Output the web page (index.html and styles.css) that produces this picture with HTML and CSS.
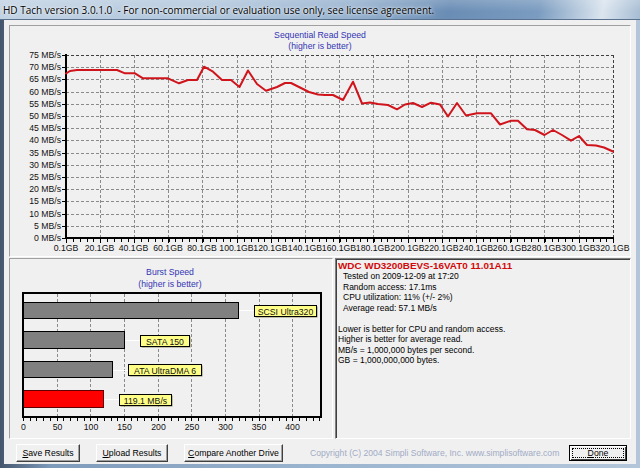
FILE: index.html
```html
<!DOCTYPE html>
<html>
<head>
<meta charset="utf-8">
<title>HD Tach</title>
<link rel="stylesheet" href="styles.css">
</head>
<body>
<div class="window">
  <div class="titlebar"><span class="title-text">HD Tach version 3.0.1.0&nbsp; - For non-commercial or evaluation use only, see license agreement.</span></div>
  <div class="client">
    <div class="seq-panel">
      <svg class="seq-chart" viewBox="10 26 620 230" width="620" height="230">
        <g class="chart-title" text-anchor="middle">
          <text x="320" y="37.5">Sequential Read Speed</text>
          <text x="320" y="48.5">(higher is better)</text>
        </g>
        <path class="grid" d="M66 67.5H613M66 79.5H613M66 92.5H613M66 104.5H613M66 116.5H613M66 128.5H613M66 140.5H613M66 153.5H613M66 165.5H613M66 177.5H613M66 189.5H613M66 201.5H613M66 214.5H613M66 226.5H613"/>
        <path class="grid" d="M100.5 55V238M134.5 55V238M168.5 55V238M202.5 55V238M237.5 55V238M271.5 55V238M305.5 55V238M339.5 55V238M373.5 55V238M408.5 55V238M442.5 55V238M476.5 55V238M510.5 55V238M544.5 55V238M579.5 55V238"/>
        <path class="grid-edge" d="M66 55.5H614M613.5 55V238"/>
        <path class="axis" d="M66 54V239M65 238H614"/>
        <path class="tick" d="M62 55.5H65M62 67.5H65M62 79.5H65M62 92.5H65M62 104.5H65M62 116.5H65M62 128.5H65M62 140.5H65M62 153.5H65M62 165.5H65M62 177.5H65M62 189.5H65M62 201.5H65M62 214.5H65M62 226.5H65M62 238.5H65"/>
        <line class="minor" x1="66" y1="240" x2="614" y2="240"/>
        <path class="tick" d="M66.5 239V243M100.5 239V243M134.5 239V243M168.5 239V243M202.5 239V243M237.5 239V243M271.5 239V243M305.5 239V243M339.5 239V243M373.5 239V243M408.5 239V243M442.5 239V243M476.5 239V243M510.5 239V243M544.5 239V243M579.5 239V243M613.5 239V243"/>
        <g class="ylabels" text-anchor="end">
          <text x="61" y="58">75 MB/s</text>
          <text x="61" y="70">70 MB/s</text>
          <text x="61" y="82">65 MB/s</text>
          <text x="61" y="95">60 MB/s</text>
          <text x="61" y="107">55 MB/s</text>
          <text x="61" y="119">50 MB/s</text>
          <text x="61" y="131">45 MB/s</text>
          <text x="61" y="143">40 MB/s</text>
          <text x="61" y="156">35 MB/s</text>
          <text x="61" y="168">30 MB/s</text>
          <text x="61" y="180">25 MB/s</text>
          <text x="61" y="192">20 MB/s</text>
          <text x="61" y="204">15 MB/s</text>
          <text x="61" y="217">10 MB/s</text>
          <text x="61" y="229">5 MB/s</text>
          <text x="61" y="241">0 MB/s</text>
        </g>
        <g class="xlabels" text-anchor="middle">
          <text x="66" y="251">0.1GB</text>
          <text x="99.5" y="251">20.1GB</text>
          <text x="133.5" y="251">40.1GB</text>
          <text x="168" y="251">60.1GB</text>
          <text x="202" y="251">80.1GB</text>
          <text x="236.5" y="251">100.1GB</text>
          <text x="270.5" y="251">120.1GB</text>
          <text x="305" y="251">140.1GB</text>
          <text x="339" y="251">160.1GB</text>
          <text x="373" y="251">180.1GB</text>
          <text x="407.5" y="251">200.1GB</text>
          <text x="441.5" y="251">220.1GB</text>
          <text x="476" y="251">240.1GB</text>
          <text x="510" y="251">260.1GB</text>
          <text x="544" y="251">280.1GB</text>
          <text x="578.5" y="251">300.1GB</text>
          <text x="612.5" y="251">320.1GB</text>
        </g>
        <polyline class="speed-line" points="66,73.5 70,71 77,70 117,70 125,73.3 135,73.3 143,78.3 168,78.3 179,83.3 188,80 197,80 204,66.7 213,71.7 222,80 231,80 239.5,87 248,70.5 257,84 266,90.7 277,87 285,83 291,83 300,87.5 309,92 318,94.5 325,95 333,95 343,100 353,81.7 362,103.5 370,102.5 378,104 388,105 397,109.3 405,104.5 413,103 422,107 431,102.7 440,104.5 448,116.5 457,103 466,115.5 477,113.3 491,113.3 500,124.5 511,120.7 518,120.7 527,129.3 535,130 544.5,135 553,130 562,135 571,140.7 579,136 587,145 596,145.5 604,147.5 613,151.5"/>
      </svg>
    </div>
    <div class="bottom-row">
      <div class="burst-panel">
        <svg class="burst-chart" viewBox="10 259 322 179" width="322" height="179">
          <g class="chart-title" text-anchor="middle">
            <text x="170" y="275">Burst Speed</text>
            <text x="170" y="286.5">(higher is better)</text>
          </g>
          <path class="grid" d="M57.5 294V416M90.5 294V416M124.5 294V416M158.5 294V416M191.5 294V416M225.5 294V416M259.5 294V416M292.5 294V416"/>
          <rect class="bar" x="23.5" y="302.5" width="215" height="16"/>
          <rect class="bar" x="23.5" y="331.5" width="101" height="17"/>
          <rect class="bar" x="23.5" y="361.5" width="89" height="16"/>
          <rect class="bar bar-drive" x="23.5" y="390.5" width="80" height="17"/>
          <path class="connector" d="M239 310.5H254M125 340.5H140M113 370.5H128M104 399.5H119"/>
          <rect class="label-shadow" x="255.5" y="306.5" width="62" height="11"/>
          <rect class="label-box" x="254.5" y="305.5" width="62" height="11"/>
          <rect class="label-shadow" x="141.5" y="336.5" width="49" height="11"/>
          <rect class="label-box" x="140.5" y="335.5" width="49" height="11"/>
          <rect class="label-shadow" x="129.5" y="365.5" width="73" height="11"/>
          <rect class="label-box" x="128.5" y="364.5" width="73" height="11"/>
          <rect class="label-shadow" x="120.5" y="395.5" width="52" height="11"/>
          <rect class="label-box" x="119.5" y="394.5" width="52" height="11"/>
          <g class="bar-labels" text-anchor="middle">
            <text x="285.5" y="314.5">SCSI Ultra320</text>
            <text x="165" y="344.5">SATA 150</text>
            <text x="165" y="373.5">ATA UltraDMA 6</text>
            <text x="145.5" y="403.5">119.1 MB/s</text>
          </g>
          <rect class="plot-box" x="23" y="293" width="298" height="124"/>
          <line class="minor" x1="23" y1="419" x2="321" y2="419"/>
          <g class="xlabels" text-anchor="middle">
            <text x="23.5" y="430">0</text>
            <text x="57.5" y="430">50</text>
            <text x="91" y="430">100</text>
            <text x="124.5" y="430">150</text>
            <text x="158.5" y="430">200</text>
            <text x="192" y="430">250</text>
            <text x="225.5" y="430">300</text>
            <text x="259" y="430">350</text>
            <text x="292.5" y="430">400</text>
          </g>
        </svg>
      </div>
      <div class="info-panel">
        <div class="drive-name">WDC WD3200BEVS-16VAT0 11.01A11</div>
        <div class="stat">Tested on 2009-12-09 at 17:20</div>
        <div class="stat">Random access: 17.1ms</div>
        <div class="stat">CPU utilization: 11% (+/- 2%)</div>
        <div class="stat">Average read: 57.1 MB/s</div>
        <div class="note gap">Lower is better for CPU and random access.</div>
        <div class="note">Higher is better for average read.</div>
        <div class="note">MB/s = 1,000,000 bytes per second.</div>
        <div class="note">GB = 1,000,000,000 bytes.</div>
      </div>
    </div>
    <div class="button-row">
      <div class="btn btn-save"><u>S</u>ave Results</div>
      <div class="btn btn-upload"><u>U</u>pload Results</div>
      <div class="btn btn-compare"><u>C</u>ompare Another Drive</div>
      <div class="copyright">Copyright (C) 2004 Simpli Software, Inc. www.simplisoftware.com</div>
      <div class="btn btn-done"><span class="focus"><u>D</u>one</span></div>
    </div>
  </div>
</div>
</body>
</html>
```

FILE: styles.css
```css
html, body {
  margin: 0;
  padding: 0;
}
body {
  width: 640px;
  height: 468px;
  overflow: hidden;
  font-family: "Liberation Sans", Arial, sans-serif;
  background: #8ea8c6;
}
.window {
  display: flex;
  flex-direction: column;
  width: 640px;
  height: 468px;
  background: linear-gradient(to right, #44566e 0%, #7f9bbb 8%, #9bb4cf 50%, #b3c6da 100%);
}
.titlebar {
  height: 20px;
  box-sizing: border-box;
  border-bottom: 1px solid #5a7190;
  padding-left: 3px;
  background:
    linear-gradient(to bottom, rgba(255,255,255,0.18), rgba(255,255,255,0) 60%),
    linear-gradient(100deg, #c2d3e4 0%, #b0c6dc 35%, #97b2cf 55%, #6a8db5 70%, #7b9cc0 84%, #dbe5ef 94%, #a6bcd3 100%);
}
.title-text {
  font-family: "Open Sans", "Noto Sans", sans-serif;
  font-size: 10px;
  line-height: 18px;
  color: #000;
  white-space: nowrap;
  text-shadow: 0 0 5px rgba(255,255,255,0.9), 0 0 2px rgba(255,255,255,0.9);
}
.client {
  flex: 1;
  margin: 0 4px 4px 4px;
  padding: 5px 5px 2px 5px;
  background: #f0f0f0;
  display: flex;
  flex-direction: column;
}
.seq-panel {
  height: 232px;
  box-sizing: border-box;
  border: 1px solid;
  border-color: #a0a0a0 #ffffff #ffffff #a0a0a0;
}
.seq-panel svg, .burst-panel svg {
  display: block;
}
.chart-title text {
  fill: #3434b4;
  font-size: 8.7px;
}
svg text {
  font-family: "Liberation Sans", Arial, sans-serif;
  font-size: 8.7px;
  fill: #111;
}
.grid {
  fill: none;
  stroke: #8a8a8a;
  stroke-width: 1;
  stroke-dasharray: 3 2;
  shape-rendering: crispEdges;
}
.grid-edge {
  fill: none;
  stroke: #404040;
  stroke-width: 1;
  stroke-dasharray: 3 2;
  shape-rendering: crispEdges;
}
.axis {
  fill: none;
  stroke: #000;
  stroke-width: 2;
  shape-rendering: crispEdges;
}
.tick {
  fill: none;
  stroke: #000;
  stroke-width: 1;
  shape-rendering: crispEdges;
}
.minor {
  stroke: #000;
  stroke-width: 3;
  stroke-dasharray: 1 5.84;
  shape-rendering: crispEdges;
}
.burst-chart .minor {
  stroke-dasharray: 1 5.735;
}
.speed-line {
  fill: none;
  stroke: #d0141c;
  stroke-width: 2;
  stroke-linejoin: round;
  stroke-linecap: round;
}
.bottom-row {
  display: flex;
  gap: 2px;
  margin-top: 1px;
  height: 181px;
}
.burst-panel {
  width: 324px;
  box-sizing: border-box;
  border: 1px solid;
  border-color: #a0a0a0 #ffffff #ffffff #a0a0a0;
}
.bar {
  fill: #808080;
  stroke: #000;
  stroke-width: 1;
}
.bar-drive {
  fill: #ff0000;
  stroke: #600000;
}
.connector {
  fill: none;
  stroke: #ffffff;
  stroke-width: 1;
}
.label-shadow {
  fill: #8c8c60;
}
.label-box {
  fill: #ffff88;
  stroke: #000;
  stroke-width: 1;
}
.plot-box {
  fill: none;
  stroke: #000;
  stroke-width: 2;
}
.info-panel {
  flex: 1;
  box-sizing: border-box;
  border: 1px solid;
  border-color: #808080 #ffffff #ffffff #808080;
  box-shadow: inset 1px 1px #404040;
  padding: 1px 0 0 2px;
  font-size: 8.5px;
  color: #000;
}
.drive-name {
  color: #d20a0a;
  font-weight: bold;
  font-size: 9.9px;
  line-height: 11px;
  white-space: nowrap;
}
.stat, .note {
  line-height: 10.5px;
  white-space: nowrap;
}
.stat {
  padding-left: 5px;
}
.note.gap {
  margin-top: 10.5px;
}
.button-row {
  display: flex;
  align-items: center;
  height: 18px;
  margin-top: 5px;
  padding-left: 7px;
  padding-right: 4px;
}
.btn {
  box-sizing: border-box;
  height: 18px;
  display: flex;
  align-items: center;
  justify-content: center;
  font-size: 8.7px;
  color: #000;
  background: #f0f0f0;
  border: 1px solid;
  border-color: #ffffff #404040 #404040 #ffffff;
  box-shadow: inset -1px -1px #a0a0a0;
  white-space: nowrap;
}
.btn-save { width: 64px; }
.btn-upload { width: 72px; margin-left: 16px; }
.btn-compare { width: 99px; margin-left: 16px; }
.copyright {
  margin-left: 27px;
  font-size: 8.6px;
  color: #a1abc5;
  white-space: nowrap;
}
.btn-done {
  width: 58px;
  height: 16px;
  margin-left: auto;
  border: 1px solid #000;
  box-shadow: inset 1px 1px #fff, inset -1px -1px #404040;
  padding: 2px;
}
.btn-done .focus {
  flex: 1;
  align-self: stretch;
  display: flex;
  align-items: center;
  justify-content: center;
  border: 1px dotted #000;
}
```
